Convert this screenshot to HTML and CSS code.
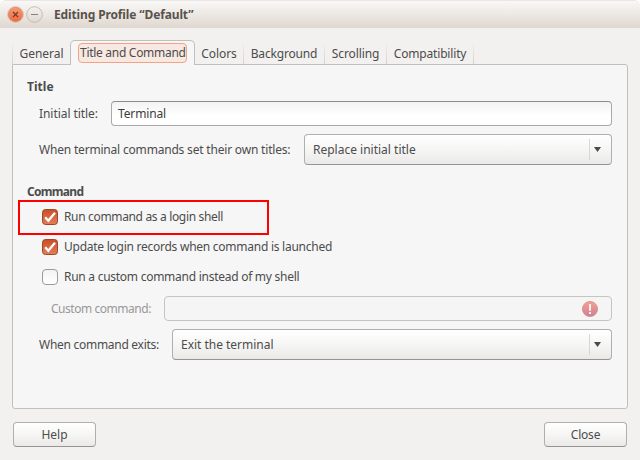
FILE: index.html
```
<!DOCTYPE html>
<html lang="en">
<head>
<meta charset="utf-8">
<title>Editing Profile “Default”</title>
<link rel="stylesheet" href="styles.css">
</head>
<body>
<div class="window">
  <header class="titlebar">
    <svg class="win-btn" width="17" height="17" viewBox="0 0 17 17">
      <defs><linearGradient id="close-fill" x1="0" y1="0" x2="0" y2="1"><stop offset="0" stop-color="#f79a75"/><stop offset="1" stop-color="#ee6a3b"/></linearGradient></defs>
      <circle cx="8.5" cy="8.5" r="8" fill="#f0e9e4" stroke="#cfc3bb" stroke-width=".8"/>
      <circle cx="8.5" cy="8.5" r="7.2" fill="url(#close-fill)" stroke="#dc7a56" stroke-width=".6"/>
      <path d="M6 6l5 5M11 6l-5 5" stroke="#6b3a28" stroke-width="1.1"/>
    </svg>
    <svg class="win-btn" width="17" height="17" viewBox="0 0 17 17">
      <defs><linearGradient id="min-fill" x1="0" y1="0" x2="0" y2="1"><stop offset="0" stop-color="#f5f2ef"/><stop offset="1" stop-color="#dfd9d3"/></linearGradient></defs>
      <circle cx="8.5" cy="8.5" r="7.8" fill="url(#min-fill)" stroke="#bfb6ae" stroke-width=".9"/>
      <path d="M5 8.5h7" stroke="#8b7f77" stroke-width="1.2"/>
    </svg>
    <h1 class="heading window-title">Editing Profile “Default”</h1>
  </header>

  <nav class="tabs">
    <div class="tab tab-general">General</div>
    <div class="tab tab-active"><span class="focus">Title and Command</span></div>
    <div class="tab tab-colors">Colors</div>
    <div class="tab tab-background">Background</div>
    <div class="tab tab-scrolling">Scrolling</div>
    <div class="tab tab-compat">Compatibility</div>
  </nav>

  <main class="panel">
    <h2 class="heading title-heading">Title</h2>
    <div class="row row-input">
      <span class="label label-initial">Initial title:</span>
      <div class="entry"><span class="entry-text">Terminal</span></div>
    </div>
    <div class="row row-combo">
      <span class="label label-own">When terminal commands set their own titles:</span>
      <div class="combo"><span class="combo-text">Replace initial title</span><span class="arrow"><i></i></span></div>
    </div>

    <h2 class="heading command-heading">Command</h2>
    <div class="check-row">
      <div class="highlight"></div>
      <svg class="check" width="16" height="16" viewBox="0 0 16 16">
        <defs><linearGradient id="check-fill" x1="0" y1="0" x2="0" y2="1"><stop offset="0" stop-color="#c94f22"/><stop offset="1" stop-color="#e2805a"/></linearGradient></defs>
        <rect x=".5" y=".5" width="15" height="15" rx="3" fill="url(#check-fill)" stroke="#9a492c"/>
        <path d="M3.2 8.3l3.1 3.4L13 3.7" fill="none" stroke="#fff" stroke-width="2.3"/>
      </svg>
      <span class="run-login">Run command as a login shell</span>
    </div>
    <div class="check-row">
      <svg class="check" width="16" height="16" viewBox="0 0 16 16">
        <rect x=".5" y=".5" width="15" height="15" rx="3" fill="url(#check-fill)" stroke="#9a492c"/>
        <path d="M3.2 8.3l3.1 3.4L13 3.7" fill="none" stroke="#fff" stroke-width="2.3"/>
      </svg>
      <span class="update-records">Update login records when command is launched</span>
    </div>
    <div class="check-row">
      <span class="check check-off"></span>
      <span class="run-custom">Run a custom command instead of my shell</span>
    </div>
    <div class="row row-input row-disabled">
      <span class="label label-custom">Custom command:</span>
      <div class="entry entry-disabled">
        <svg width="16" height="16" viewBox="0 0 16 16">
          <defs><linearGradient id="error-fill" x1="0" y1="0" x2="0" y2="1"><stop offset="0" stop-color="#eea394"/><stop offset=".55" stop-color="#e18e91"/><stop offset="1" stop-color="#ca829f"/></linearGradient></defs>
          <circle cx="8" cy="8" r="7.6" fill="url(#error-fill)" stroke="#d98182" stroke-width=".7"/>
          <path d="M7 3h2v6.8H7zM7 11h2v2H7z" fill="#fbefed"/>
        </svg>
      </div>
    </div>
    <div class="row row-combo">
      <span class="label label-exits">When command exits:</span>
      <div class="combo"><span class="exit-text">Exit the terminal</span><span class="arrow"><i></i></span></div>
    </div>
  </main>

  <footer class="actions">
    <div class="button">Help</div>
    <div class="button button-close">Close</div>
  </footer>
</div>
</body>
</html>
```
FILE: styles.css
```
* { box-sizing: border-box; }

body {
  margin: 0;
  background: #fff;
  color: #4c4c4c;
  font: 12px/16px "Noto Sans", "Open Sans", sans-serif;
  white-space: nowrap;
}

.window {
  width: 640px;
  height: 460px;
  background: #f2f1ef;
  border-radius: 6px 6px 0 0;
  overflow: hidden;
}

.titlebar {
  height: 28px;
  padding: 0 7px;
  display: flex;
  align-items: center;
  gap: 2px;
  background: linear-gradient(#f9f8f7, #ece8e3 50%, #dfd7d0);
  border-top: 1px solid #e9e6e3;
  border-radius: 6px 6px 0 0;
}

.win-btn { flex: none; }

.heading {
  margin: 0;
  font-size: 12px;
  line-height: 16px;
  font-weight: 700;
}

.window-title { margin-left: 9px; color: #59524c; letter-spacing: -.13px; }

.tabs {
  height: 36px;
  padding: 12px 12px 0;
  display: flex;
}

.tab {
  height: 24px;
  padding-top: 6px;
  text-align: center;
  border-right: 1px solid;
  border-image: linear-gradient(transparent 10%, #d3d0cc) 1;
}

.tab-general { width: 58px; border-right: 0; border-left: 1px solid; letter-spacing: -.03px; }

.tab-active {
  position: relative;
  width: 125px;
  height: 25px;
  padding: 2px 0 0 7px;
  text-align: left;
  background: #f6f6f6;
  border: 1px solid #c3bfbb;
  border-bottom: 0;
  border-image: none;
  border-radius: 5px 5px 0 0;
}

.focus {
  display: block;
  width: 109px;
  height: 20px;
  padding: 1px 0 0 1px;
  color: #4c4c4c;
  background: #f8e8e2;
  border: 1px solid #f2a385;
  border-radius: 4px;
  letter-spacing: -.29px;
}

.tab-colors { width: 49px; letter-spacing: -.1px; }
.tab-background { width: 81px; letter-spacing: -.17px; }
.tab-scrolling { width: 62px; letter-spacing: -.1px; }
.tab-compat { width: 87px; letter-spacing: -.17px; }

.panel {
  margin: 0 12px;
  height: 345px;
  padding: 14px 15px 0 14px;
  background: #f6f6f6;
  border: 1px solid #c3bfbb;
  border-radius: 0 3px 3px 3px;
}

.title-heading { letter-spacing: .05px; }
.command-heading { margin-top: 19px; letter-spacing: -.7px; }

.row { display: flex; align-items: center; padding-left: 12px; gap: 13px; }
.row-input { height: 25px; margin-top: 6px; }
.row-combo { height: 31px; margin-top: 8px; }
.row-disabled { margin-top: 4px; padding-left: 24px; }

.label { flex: none; }
.label-initial { width: 59px; letter-spacing: -.06px; }
.label-own { width: 252px; letter-spacing: -.19px; }
.label-custom { width: 100px; letter-spacing: -.46px; color: #9a9896; }
.label-exits { width: 120px; letter-spacing: -.28px; }

.entry {
  flex: 1;
  height: 25px;
  padding: 0 6px;
  display: flex;
  align-items: center;
  background: linear-gradient(#f3f3f3, #fff 60%);
  border: 1px solid #a9a9a7;
  border-top-color: #8d8d8b;
  border-radius: 4px;
}

.entry-text { color: #3c3c3c; letter-spacing: -.14px; }

.entry-disabled {
  justify-content: flex-end;
  padding-right: 13px;
  background: #f5f5f5;
  border-color: #c6c5c3;
}

.combo, .button {
  background: linear-gradient(#fff, #f6f6f5 50%, #eae9e8);
  border: 1px solid #b0afad;
  border-bottom-color: #959492;
  border-radius: 4px;
}

.combo {
  flex: 1;
  height: 31px;
  padding-left: 8px;
  display: flex;
  align-items: center;
  justify-content: space-between;
}

.exit-text { letter-spacing: -.02px; }

.arrow {
  width: 22px;
  height: 21px;
  padding: 8px 0 0 4px;
  border-left: 1px solid #d8d7d5;
}

.arrow i {
  display: block;
  width: 7px;
  height: 5px;
  background: #4a4a4a;
  clip-path: polygon(0 0, 100% 0, 50% 100%);
}

.check-row {
  position: relative;
  height: 30px;
  padding-left: 15px;
  display: flex;
  align-items: center;
  gap: 6px;
}

.command-heading + .check-row { margin-top: 2px; }

.check { flex: none; width: 16px; height: 16px; }

.check-off {
  background: linear-gradient(#f3f3f3, #fff);
  border: 1px solid #9b9b99;
  border-radius: 4px;
}

.highlight {
  position: absolute;
  left: -9px;
  top: -2px;
  width: 251px;
  height: 35px;
  border: 2px solid #f00;
}

.run-login { letter-spacing: -.34px; }
.update-records { letter-spacing: -.255px; }
.run-custom { letter-spacing: -.265px; }

.actions {
  padding: 13px 13px 0;
  display: flex;
  justify-content: space-between;
}

.button {
  width: 83px;
  height: 25px;
  line-height: 23px;
  text-align: center;
}

.button-close { letter-spacing: -.19px; }
```
